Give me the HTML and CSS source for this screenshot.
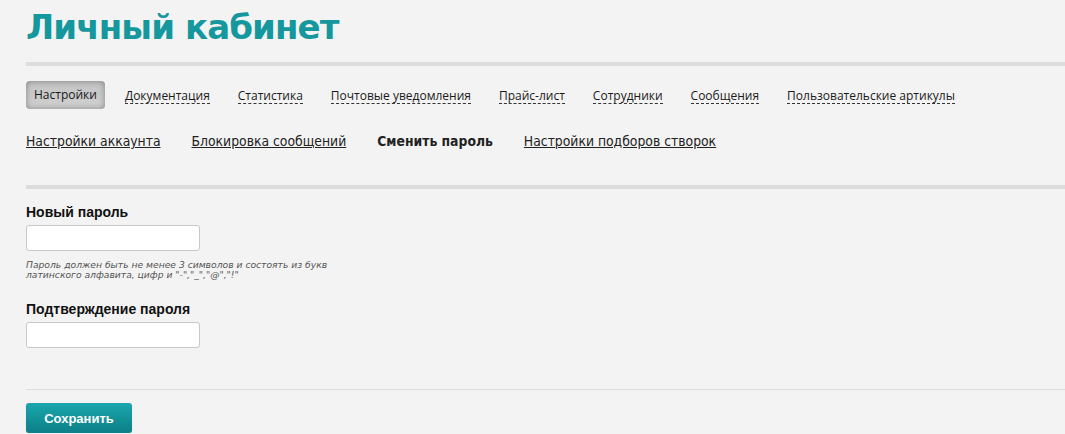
FILE: index.html
```html
<!DOCTYPE html>
<html lang="ru">
<head>
<meta charset="utf-8">
<title>Личный кабинет</title>
<link rel="stylesheet" href="styles.css">
</head>
<body>
<div class="page">
  <h1 class="title">Личный кабинет</h1>
  <hr class="rule rule-thick">
  <nav class="tabs">
    <a class="tab tab-active">Настройки</a>
    <a class="tab">Документация</a>
    <a class="tab">Статистика</a>
    <a class="tab">Почтовые уведомления</a>
    <a class="tab">Прайс-лист</a>
    <a class="tab">Сотрудники</a>
    <a class="tab">Сообщения</a>
    <a class="tab">Пользовательские артикулы</a>
  </nav>
  <nav class="subnav">
    <a class="sublink">Настройки аккаунта</a>
    <a class="sublink">Блокировка сообщений</a>
    <span class="sublink sublink-current">Сменить пароль</span>
    <a class="sublink">Настройки подборов створок</a>
  </nav>
  <hr class="rule rule-thick">
  <form class="form">
    <div class="field">
      <label class="label">Новый пароль</label>
      <input class="input" type="password">
      <p class="hint">Пароль должен быть не менее 3 символов и состоять из букв латинского алфавита, цифр и "-","_","@","!"</p>
    </div>
    <div class="field field-second">
      <label class="label">Подтверждение пароля</label>
      <input class="input" type="password">
    </div>
    <hr class="rule rule-thin">
    <button class="save" type="button">Сохранить</button>
  </form>
</div>
</body>
</html>
```
FILE: styles.css
```css
html, body {
  margin: 0;
  padding: 0;
  background: #f3f3f3;
}
body {
  font-family: "DejaVu Sans", Verdana, sans-serif;
  color: #222;
}
.page {
  padding-left: 26px;
}
.title {
  margin: 0;
  padding-top: 5px;
  height: 57px;
  font-family: "DejaVu Sans", sans-serif;
  font-weight: bold;
  font-size: 34px;
  line-height: 44px;
  color: #14979d;
  letter-spacing: -0.9px;
}
.rule {
  border: 0;
  margin: 0;
}
.rule-thick {
  height: 4px;
  background: #dcdcdc;
}
.rule-thin {
  height: 1px;
  background: #dddddd;
  margin-top: 41px;
}
.tabs {
  display: flex;
  align-items: center;
  gap: 28px;
  margin-top: 15px;
  height: 28px;
  font-family: "Open Sans", "Noto Sans", sans-serif;
  font-size: 12px;
}
.tab {
  color: #1a1a1a;
  text-decoration: none;
  border-bottom: 1px dashed #333;
  line-height: 15px;
  padding-top: 1px;
}
.tab-active {
  border: 0;
  height: 28px;
  box-sizing: border-box;
  padding: 0 8px;
  margin-right: -8px;
  line-height: 28px;
  border-radius: 4px;
  background: linear-gradient(#c4c4c4, #d0d0d0);
  box-shadow: inset 0 0 6px rgba(0,0,0,0.35);
}
.subnav {
  display: flex;
  gap: 31px;
  margin-top: 23px;
  height: 53px;
  font-family: "DejaVu Sans Condensed", "DejaVu Sans", sans-serif;
  font-size: 13.8px;
  line-height: 18px;
}
.sublink {
  color: #222;
  text-decoration: underline;
}
.sublink-current {
  font-weight: bold;
  text-decoration: none;
}
.form {
  padding-top: 15px;
}
.field {
  display: flex;
  flex-direction: column;
  align-items: flex-start;
}
.field-second {
  margin-top: 21px;
}
.label {
  font-family: "Liberation Sans", Arial, sans-serif;
  font-weight: bold;
  font-size: 14px;
  line-height: 16px;
  color: #111;
}
.input {
  margin-top: 5px;
  width: 174px;
  height: 26px;
  box-sizing: border-box;
  border: 1px solid #c8c8c8;
  border-radius: 3px;
  background: #fff;
}
.hint {
  margin: 9px 0 0;
  width: 310px;
  font-style: italic;
  font-size: 9.2px;
  line-height: 10px;
  color: #555;
}
.save {
  margin-top: 13px;
  width: 106px;
  height: 30px;
  border: 0;
  border-radius: 3px;
  background: linear-gradient(#1aa6ad, #0d7f86);
  color: #fff;
  font-family: "Liberation Sans", Arial, sans-serif;
  font-weight: bold;
  font-size: 13px;
  box-shadow: 0 1px 1px rgba(0,0,0,0.2);
}
```
